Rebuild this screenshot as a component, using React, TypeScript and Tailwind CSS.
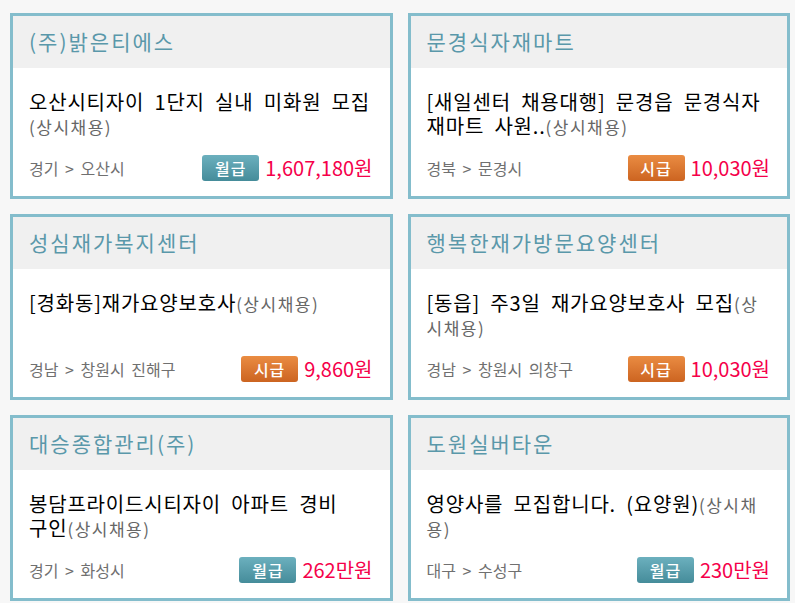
import type { ReactNode } from "react";

interface Job {
  company: string;
  lines: ReactNode[];
  location: string;
  payType: "월급" | "시급";
  pay: string;
}

const sub = "text-[17px] text-[#666] tracking-[1.5px]";

const jobs: Job[] = [
  {
    company: "(주)밝은티에스",
    lines: ["오산시티자이 1단지 실내 미화원 모집", <span className={sub}>(상시채용)</span>],
    location: "경기 > 오산시",
    payType: "월급",
    pay: "1,607,180원",
  },
  {
    company: "문경식자재마트",
    lines: [
      "[새일센터 채용대행] 문경읍 문경식자",
      <>
        재마트 사원..<span className={sub}>(상시채용)</span>
      </>,
    ],
    location: "경북 > 문경시",
    payType: "시급",
    pay: "10,030원",
  },
  {
    company: "성심재가복지센터",
    lines: [
      <>
        [경화동]재가요양보호사<span className={sub}>(상시채용)</span>
      </>,
    ],
    location: "경남 > 창원시 진해구",
    payType: "시급",
    pay: "9,860원",
  },
  {
    company: "행복한재가방문요양센터",
    lines: [
      <>
        [동읍] 주3일 재가요양보호사 모집<span className={sub}>(상</span>
      </>,
      <span className={sub}>시채용)</span>,
    ],
    location: "경남 > 창원시 의창구",
    payType: "시급",
    pay: "10,030원",
  },
  {
    company: "대승종합관리(주)",
    lines: [
      "봉담프라이드시티자이 아파트 경비",
      <>
        구인<span className={sub}>(상시채용)</span>
      </>,
    ],
    location: "경기 > 화성시",
    payType: "월급",
    pay: "262만원",
  },
  {
    company: "도원실버타운",
    lines: [
      <>
        영양사를 모집합니다. (요양원)<span className={sub}>(상시채</span>
      </>,
      <span className={sub}>용)</span>,
    ],
    location: "대구 > 수성구",
    payType: "월급",
    pay: "230만원",
  },
];

function JobCard({ job }: { job: Job }) {
  const badge =
    job.payType === "시급"
      ? "bg-gradient-to-b from-[#ea8c42] to-[#cc6420]"
      : "bg-gradient-to-b from-[#6cb0be] to-[#458c9a]";

  return (
    <div className="h-[186px] border-[3px] border-[#84bdcc] bg-white flex flex-col">
      <div className="h-[52px] shrink-0 bg-[#f0f0f0] flex items-center pl-4">
        <span className="text-[21px] text-[#5a98aa] tracking-[2px]">{job.company}</span>
      </div>
      <div className="flex-1 pl-4 pr-[17px] pt-[22px]">
        <div className="h-[48px] text-[20px] text-black tracking-[0.8px] [word-spacing:5px] whitespace-nowrap">
          {job.lines.map((line, i) => (
            <div key={i} className="h-[24px] leading-[24px]">
              {line}
            </div>
          ))}
        </div>
        <div className="mt-[17px] h-[26px] flex items-center justify-between">
          <span className="text-[16px] text-[#707070] [word-spacing:3px]">{job.location}</span>
          <div className="flex items-center gap-[6px]">
            <span
              className={`${badge} w-[57px] h-[26px] rounded-[3px] flex items-center justify-center text-[16px] text-white font-medium tracking-[1px]`}
            >
              {job.payType}
            </span>
            <span className="text-[20px] text-[#f5004a]">{job.pay}</span>
          </div>
        </div>
      </div>
    </div>
  );
}

export default function App() {
  return (
    <div
      className="w-[795px] h-[603px] overflow-hidden bg-[#f7f7f7] pl-[10px] pr-[5px] pt-[13px]"
      style={{ fontFamily: '"Noto Sans CJK KR", "Noto Sans", sans-serif' }}
    >
      <div className="grid grid-cols-2 gap-x-[15px] gap-y-[15px]">
        {jobs.map((job) => (
          <JobCard key={job.company} job={job} />
        ))}
      </div>
    </div>
  );
}
